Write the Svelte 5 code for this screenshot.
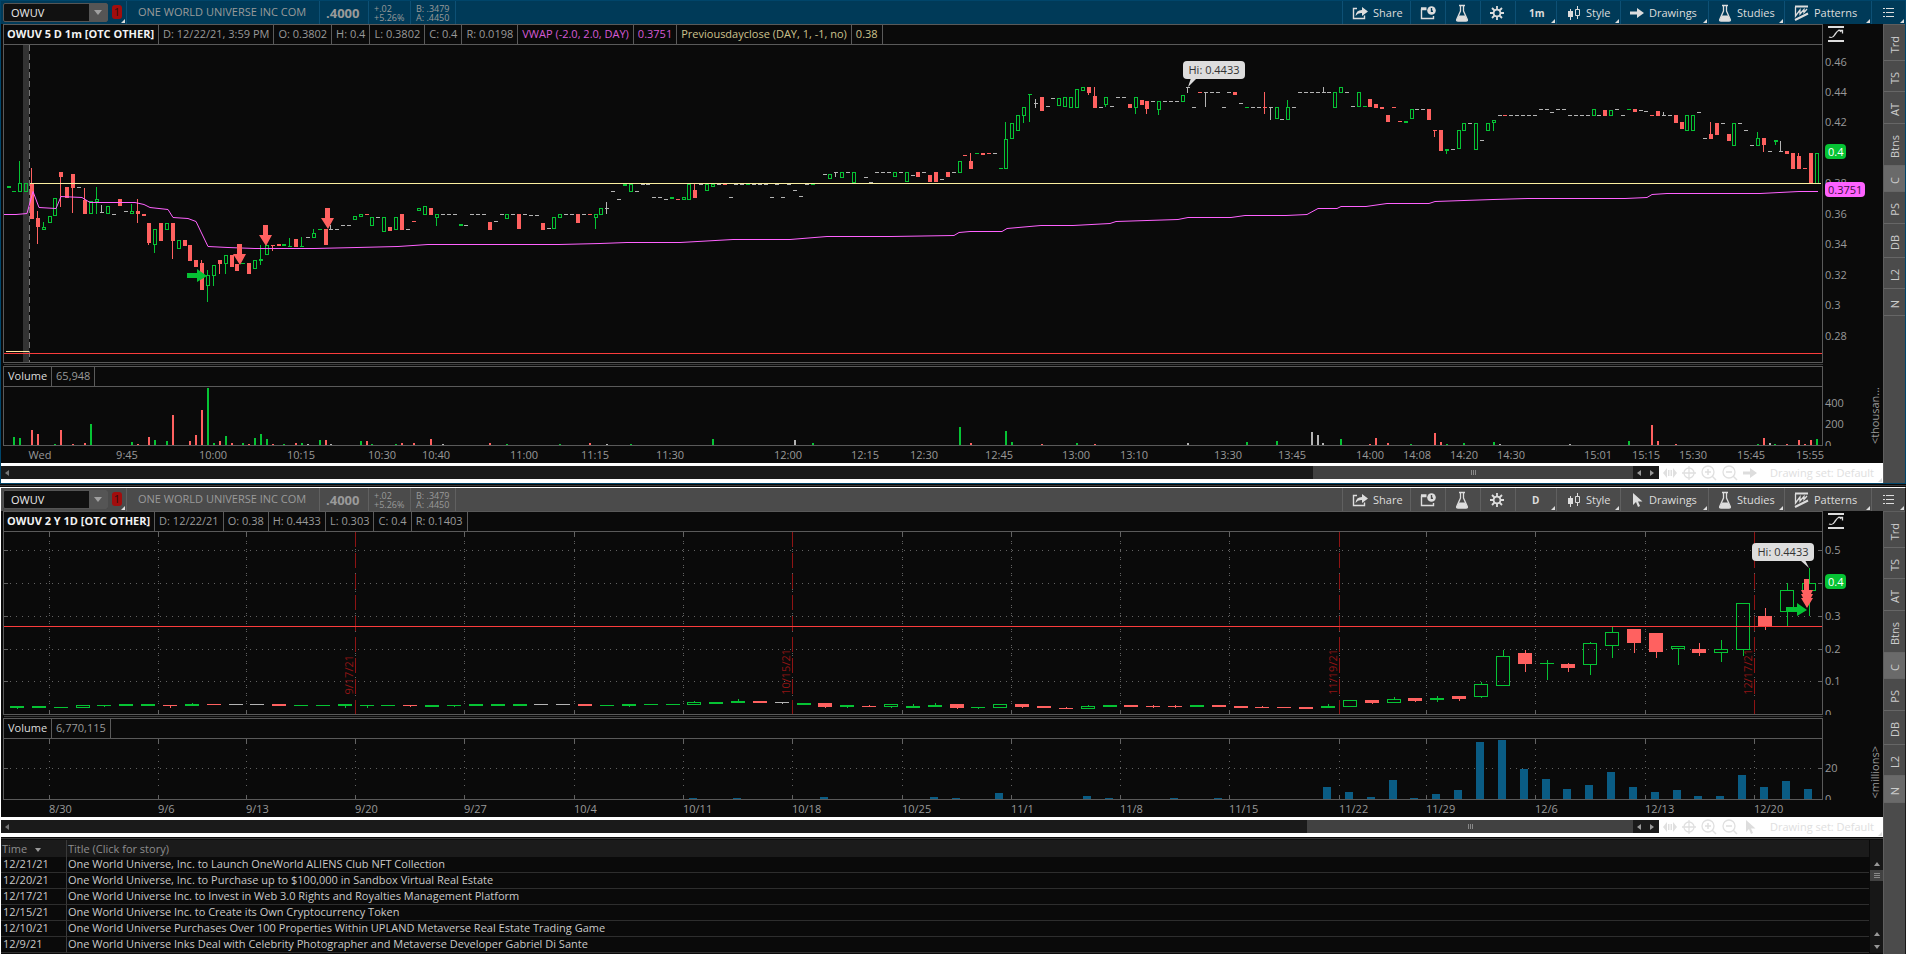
<script>
  const GREEN = '#06c334';
  const RED = '#ff6160';
  const GREY = '#b4b4b4';
  const tone = { h: GREEN, G: GREEN, g: GREEN, r: RED, d: RED, n: GREY };

  // Each mark: kind, x, top, bottom, [wick top, wick bottom]; dashes (n, g, d): kind, x, y, [wick top, wick bottom]
  function parse(source) {
    return source.trim().split(/\s*[,\n]\s*/).filter(Boolean).map((entry) => {
      const [kind, ...rest] = entry.split(' ');
      const v = rest.map(Number);
      if ('ngd'.includes(kind)) {
        return { kind, x: v[0], top: v[1], bottom: v[1] + 1, high: v[2] ?? v[1], low: v[3] ?? v[1] + 1 };
      }
      return { kind, x: v[0], top: v[1], bottom: v[2], high: v[3] ?? v[1], low: v[4] ?? v[2] };
    });
  }

  const minuteCandles = parse(`
    G 9 186 188,g 14 191,h 20 183 192 161 192,h 26 183 192,r 32 183 219 168 219,r 38 218 227 211 244
    h 44 227 230 222 230,h 50 216 223,h 55 198 216,r 61 172 177 172 207,r 67 187 198,r 73 174 188 174 213
    n 79 187,r 85 200 214 188 214,h 91 201 214,h 97 199 202 187 214,n 102 212 205 212,h 108 206 214,n 114 214
    r 120 199 206,n 126 211,h 132 211 214 204 214,r 138 211 214 199 223,r 144 214 216,r 149 223 243 223 245
    h 155 229 245 229 253,r 161 223 241,h 167 223 230,r 173 223 241 223 259,h 179 240 249,r 185 240 246
    r 190 245 261,r 196 260 267,r 202 263 290 260 290,h 208 275 286 270 302,h 214 265 276 265 286
    r 220 260 264 260 274,h 226 255 264 255 274,r 232 255 267,r 237 264 271,g 243 263,r 249 263 274,h 255 260 269
    G 261 259 261 245 265,h 267 245 255,d 273 245 245 251,r 279 244 246,G 284 244 246,g 290 246 238 246
    r 296 239 247,g 302 246 237 246,n 308 237,h 314 233 238 229 238,g 320 229,r 326 229 245,n 331 229 225 229
    n 337 229,n 343 225,n 349 225,h 355 216 220,h 361 214 217,d 367 214,h 372 217 226,n 378 217,h 384 217 232
    r 390 227 231,h 396 217 230,r 402 214 230,n 408 229,d 414 221,h 419 208 211,h 425 206 215,r 431 208 215
    h 437 214 218 214 226,n 443 214,n 449 214,n 455 214,G 461 224 226,n 466 225,n 472 214,n 478 214,n 484 214
    r 490 222 230,n 496 221,n 502 214,h 507 214 219,n 513 214,r 519 214 229,n 525 214,n 531 215,n 537 215
    r 543 223 230,n 549 228,h 554 217 229,h 560 214 218,n 566 214,n 572 214,r 578 214 223,n 584 214,d 590 214
    h 596 214 218 214 229,h 601 208 215,n 607 208 202 214,n 613 191,n 619 199,G 625 184 186,h 631 184 192,n 637 191
    n 643 184,n 648 184,n 654 197,n 660 197,n 666 199,G 672 197 199,d 678 199,h 684 197 200,h 689 184 200
    r 695 190 198 184 198,n 701 184,h 707 184 191,h 713 184 187,n 719 184,d 725 184,n 731 197,n 736 184,n 742 184
    g 748 184,n 754 184,n 760 184,n 766 184,n 772 197,n 777 184,n 783 197,n 789 184,n 795 190,n 801 196,n 807 184,g 813 184
    n 825 174,h 830 174 179,n 836 172 172 177,h 842 172 178,n 848 172,h 854 172 183,n 866 177,n 871 182,n 877 172
    n 883 172,n 889 172,h 895 172 177,n 901 172,h 907 172 182,n 913 175,r 918 172 177,n 924 172,r 930 175 182
    r 936 172 182,n 942 179,r 948 172 177,n 954 172,h 960 161 173,d 965 155,r 971 161 169 153 169,g 977 153
    r 983 153 155,d 989 153,n 995 153,g 1001 168,h 1006 139 169 122 169,h 1012 123 139,h 1018 115 131
    h 1024 107 116 107 123,g 1030 94 94 122,n 1036 103 99 108,r 1042 97 111,n 1048 106,n 1053 98,h 1059 98 106
    h 1065 97 107,h 1071 97 108,h 1077 89 108,h 1083 87 91,r 1089 87 93 87 95,r 1095 96 108 87 108,n 1101 107
    h 1106 97 105 97 107,n 1112 106,n 1118 97,n 1124 97,r 1130 104 108,h 1136 97 108 97 114,r 1142 100 105
    r 1147 101 109 101 114,n 1153 101,h 1159 101 110 101 115,n 1165 101,n 1171 101,n 1177 101,h 1183 95 102
    n 1188 87 87 93,n 1194 107,d 1200 92,n 1206 92 92 107,n 1212 92,n 1218 92,n 1224 107,n 1229 92,r 1235 92 95
    n 1241 103,g 1247 107,n 1253 107,n 1259 107,d 1265 107 92 114,n 1271 107 107 120,h 1277 107 119,n 1282 119
    h 1288 107 120 100 120,n 1294 107,n 1300 92,n 1306 92,n 1312 92,n 1318 92,n 1324 92 87 92,n 1329 92
    h 1335 92 108,h 1341 87 93,n 1347 92,n 1353 106,h 1359 92 107,g 1365 106,r 1370 99 107,r 1376 104 108
    r 1382 107 109,r 1388 115 122,d 1394 107,d 1400 121,G 1406 121 123,h 1412 109 119,n 1417 109,n 1423 109
    r 1429 109 120,d 1435 130 130 137,r 1441 130 151,G 1447 149 151 149 154,n 1453 149,h 1459 130 149
    h 1464 123 131,n 1470 123,h 1476 123 150,n 1482 140,h 1488 123 131,h 1494 120 123 120 131,n 1500 115
    d 1505 115,n 1511 115,n 1517 115,n 1523 115,n 1529 115,n 1535 115,n 1541 109,n 1547 109,n 1552 112,n 1558 109
    n 1564 109,n 1570 115,n 1576 115,n 1582 115,n 1588 115,h 1594 109 116,n 1599 115,r 1605 110 116,h 1611 110 116
    n 1617 109,n 1623 115,g 1629 109,r 1635 109 112,n 1641 110,n 1646 111,d 1652 115,r 1658 111 116
    n 1664 115 112 115,n 1670 115,r 1676 115 123,r 1682 122 129,h 1687 115 131,h 1693 115 131,n 1699 112
    n 1705 138,r 1711 134 139 122 139,r 1717 123 135,n 1723 123,r 1729 134 141,h 1734 123 146,n 1740 123
    n 1746 130,n 1752 145,h 1758 138 146 132 146,r 1764 138 145 138 152,n 1770 151,G 1776 140 142 140 145
    n 1781 151 141 151,r 1787 151 154,r 1793 153 169,r 1799 156 169 153 169,d 1805 168,r 1811 153 184,h 1817 153 184
  `);

  const vwap =
    '4,214 16,214 27,213 33,191 39,207 56,208 61,196 82,197 90,202 135,202 144,204 150,207 168,209 173,217 188,218 196,221 208,246 228,247 255,248 314,248 357,247 398,246 428,244 559,244 600,243 627,242 680,242 733,239 790,239 827,236 891,236 954,235 959,232 970,231 1002,231 1007,228 1041,225 1073,225 1110,223 1116,221 1178,219 1188,217 1231,217 1245,215 1286,215 1307,214 1318,208 1337,208 1341,206 1366,206 1387,203 1429,203 1435,201 1493,199 1528,198 1625,198 1647,197 1652,194 1667,193 1760,193 1799,191 1818,191';

  const minuteVolume = 'g 14 8,g 20 7,r 32 15,r 38 11,g 55 1,r 61 15,r 73 1,r 85 2,g 91 21,g 132 3,r 138 1,r 149 8,g 155 5,g 167 4,r 173 30,r 190 4,r 196 10,r 202 35,g 208 57,g 214 2,r 220 4,g 226 9,r 232 2,g 243 2,r 249 1,g 255 7,g 261 11,g 267 6,r 273 1,g 284 1,r 296 2,g 302 2,n 308 1,g 320 5,r 326 5,n 331 1,g 361 4,r 367 4,g 372 1,g 396 1,r 402 2,r 414 2,r 431 6,n 443 1,r 490 2,g 507 1,g 560 1,r 590 2,n 607 1,g 631 1,g 713 6,n 795 5,g 813 2,g 960 18,r 971 2,g 1006 14,g 1012 3,r 1042 1,g 1077 2,r 1095 1,n 1188 2,g 1247 3,g 1277 4,n 1312 13,n 1318 10,n 1323 2,g 1341 6,r 1370 1,r 1376 7,r 1388 2,g 1411 1,r 1435 12,r 1441 3,g 1447 1,g 1464 2,g 1494 3,n 1500 1,n 1570 1,g 1629 4,r 1652 20,r 1658 4,r 1676 1,g 1758 1,r 1764 7,n 1770 2,g 1775 1,r 1787 1,r 1799 5,r 1805 1,r 1811 5,g 1817 6'
    .split(',')
    .map((entry) => entry.split(' '))
    .map(([kind, x, h]) => ({ kind, x: +x, h: +h }));

  const slot = (i) => Math.round(17 + 21.85 * i);
  const dailyCandles = parse(`
    G 0 706 708 706 709,G 1 706 708,g 2 707,h 3 705 708,g 4 705 705 707,G 5 704 706,G 6 704 706,d 7 705 705 708
    G 8 704 706 703 706,d 9 704,n 10 704,n 11 704,r 12 704 706,g 13 705,g 14 705,G 15 704 706 704 708
    g 16 705 705 708,g 17 705,d 18 705 705 707,G 19 705 707,g 20 705 705 707,G 21 704 706,G 22 704 706,G 23 704 706
    n 24 704,n 25 704,r 26 704 706,g 27 705,G 28 704 706 704 707,g 29 704,g 30 704,h 31 702 705 701 705
    G 32 702 704,G 33 701 703 699 703,r 34 701 703,n 35 702 702 704,G 36 703 705,r 37 703 707 703 708
    G 38 705 707 705 708,d 39 706 705 707,h 40 704 707 704 708,G 41 706 708 704 708,G 42 705 707 703 707
    r 43 704 708 704 709,g 44 707 707 709,h 45 704 708,r 46 704 707 704 708,r 47 706 708,d 48 708 707 709
    h 49 706 709 705 709,G 50 705 707,r 51 705 707,d 52 706 705 708,d 53 706 705 708,G 54 705 707,r 55 705 707
    r 56 706 708,d 57 707 706 708,d 58 707,r 59 707 709,G 60 706 708 704 708,h 61 700 707,r 62 700 703 700 704
    h 63 699 703 697 703,r 64 698 701 698 702,h 65 698 700 696 702,r 66 696 699 696 701,h 67 684 697 682 698
    h 68 656 686 650 686,r 69 653 664 650 672,g 70 663 660 680,r 71 664 668 663 672,h 72 643 665 642 675
    h 73 632 646 627 658,r 74 629 643 629 653,r 75 633 652 633 658,h 76 646 649 646 665,r 77 649 653 643 656
    h 78 649 653 640 662,h 79 603 650 603 656,r 80 616 627 608 630,h 81 590 612 583 626,h 82 583 591 568 616
  `).map((c) => ({ ...c, x: slot(c.x) }));

  const recent = [12, 7, 2, 19, 1, 5, 9, 57, 59, 30, 20, 10, 14, 27, 12, 7, 9, 3, 3, 24, 12, 18, 10];
  const earlier = [[31, 1], [33, 1], [37, 2], [42, 2], [43, 1], [45, 6], [49, 3], [50, 1], [53, 1], [55, 1]];
  const dailyVolume = [...earlier, ...recent.map((h, i) => [60 + i, h])];

  const minuteTimes = [
    ['Wed', 40], ['9:45', 127], ['10:00', 213], ['10:15', 301], ['10:30', 382], ['10:40', 436], ['11:00', 524],
    ['11:15', 595], ['11:30', 670], ['12:00', 788], ['12:15', 865], ['12:30', 924], ['12:45', 999], ['13:00', 1076],
    ['13:10', 1134], ['13:30', 1228], ['13:45', 1292], ['14:00', 1370], ['14:08', 1417], ['14:20', 1464],
    ['14:30', 1511], ['15:01', 1598], ['15:15', 1646], ['15:30', 1693], ['15:45', 1751], ['15:55', 1810],
  ];
  const days = [
    ['8/30', 49], ['9/6', 158], ['9/13', 246], ['9/20', 355], ['9/27', 464], ['10/4', 574], ['10/11', 683],
    ['10/18', 792], ['10/25', 902], ['11/1', 1011], ['11/8', 1120], ['11/15', 1229], ['11/22', 1339],
    ['11/29', 1426], ['12/6', 1535], ['12/13', 1645], ['12/20', 1754],
  ];
  const expirations = [['9/17/21', 355], ['10/15/21', 792], ['11/19/21', 1339], ['12/17/21', 1754]];

  const minuteInfo = [
    ['OWUV 5 D 1m [OTC OTHER]', 'title'], ['D: 12/22/21, 3:59 PM', ''], ['O: 0.3802', ''], ['H: 0.4', ''],
    ['L: 0.3802', ''], ['C: 0.4', ''], ['R: 0.0198', ''], ['VWAP (-2.0, 2.0, DAY)', 'pink'], ['0.3751', 'pink'],
    ['Previousdayclose (DAY, 1, -1, no)', 'sand'], ['0.38', 'sand'],
  ];
  const dailyInfo = [
    ['OWUV 2 Y 1D [OTC OTHER]', 'title'], ['D: 12/22/21', ''], ['O: 0.38', ''], ['H: 0.4433', ''],
    ['L: 0.303', ''], ['C: 0.4', ''], ['R: 0.1403', ''],
  ];

  const tabs = [['Trd', 't36'], ['TS', 't31'], ['AT', 't32'], ['Btns', 't42'], ['C', 't26'], ['PS', 't32'], ['DB', 't34'], ['L2', 't31'], ['N', 't27']];

  const news = [
    ['12/21/21', 'One World Universe, Inc. to Launch OneWorld ALIENS Club NFT Collection'],
    ['12/20/21', 'One World Universe, Inc. to Purchase up to $100,000 in Sandbox Virtual Real Estate'],
    ['12/17/21', 'One World Universe Inc. to Invest in Web 3.0 Rights and Royalties Management Platform'],
    ['12/15/21', 'One World Universe Inc. to Create its Own Cryptocurrency Token'],
    ['12/10/21', 'One World Universe Purchases Over 100 Properties Within UPLAND Metaverse Real Estate Trading Game'],
    ['12/9/21', 'One World Universe Inks Deal with Celebrity Photographer and Metaverse Developer Gabriel Di Sante'],
  ];

  const left = (x) => `${((x - 4) / 1818) * 100}%`;
</script>

{#snippet candles(list, half, wickShift)}
  {#each list as c}
    {@const w = half * 2}
    {#if c.high < c.top}<rect x={c.x + wickShift} y={c.high} width="1" height={c.top - c.high} fill={tone[c.kind]} />{/if}
    {#if c.low > c.bottom}<rect x={c.x + wickShift} y={c.bottom} width="1" height={c.low - c.bottom} fill={tone[c.kind]} />{/if}
    {#if c.kind === 'h'}
      <path d="M{c.x - half} {c.top}h{w}v{c.bottom - c.top}h{-w}zM{c.x - half + 1} {c.top + 1}v{c.bottom - c.top - 2}h{w - 2}v{-(c.bottom - c.top - 2)}z" fill={GREEN} />
    {:else}
      <rect x={c.x - half} y={c.top} width={w} height={c.bottom - c.top} fill={tone[c.kind]} />
    {/if}
  {/each}
{/snippet}

{#snippet downArrow(x, y)}
  <path d="M{x - 3} {y}h5v10h4l-6 11l-7 -11h4z" fill={RED} />
{/snippet}

{#snippet flask()}
  <svg width="14" height="18" viewBox="0 0 14 18"><path d="M4 1.500h6M5.500 2v5L1.800 15.200Q1 17 3 17H11Q13 17 12.200 15.200L8.500 7V2" fill="none" stroke="#ddd" stroke-width="1.300" /><path d="M3.800 11.500h6.400l2.200 4.500Q12 17 11 17H3Q2 17 1.600 16z" fill="#ddd" /></svg>
{/snippet}

{#snippet rangeIcon()}
  <svg class="range" width="16" height="16" viewBox="0 0 16 16"><path d="M0 0h16v2H0zM0 14h16v2H0z" fill="#ddd" /><path d="M1 11C6 13 6 9 8 7C10 4 12 3 13 6M10 4.500h4.500v3" fill="none" stroke="#ddd" stroke-width="1.300" /></svg>
{/snippet}

{#snippet toolbar(interval, cursor)}
  <header class="toolbar">
    <div class="symbol">
      <input aria-label="Symbol" value="OWUV" />
      <button class="drop" aria-label="Choose symbol"><svg width="8" height="5" viewBox="0 0 8 5"><path d="M0 0h8L4 5z" fill="#a0a0a0" /></svg></button>
    </div>
    <button class="link corner"><span>1</span></button>
    <div class="quote name">ONE WORLD UNIVERSE INC COM</div>
    <div class="quote last">.4000</div>
    <div class="quote pair"><span>+.02</span><span>+5.26%</span></div>
    <div class="quote pair bid"><span>B: .3479</span><span>A: .4450</span></div>
    <nav>
      <button class="w68">
        <svg width="16" height="14" viewBox="0 0 16 14"><path d="M5 2.500H1.500V12.500H12.500V9.500" fill="none" stroke="#ddd" stroke-width="1.400" /><path d="M3.500 10Q4 4 10 4V1L16 5.500L10 10V7Q6 6.500 3.500 10z" fill="#ddd" /></svg>
        Share
      </button>
      <button class="w35" aria-label="Notes">
        <svg width="16" height="14" viewBox="0 0 16 14"><path d="M6.500 3.500H1.500V12.500H13.500V10M1 2h5.500" fill="none" stroke="#ddd" stroke-width="1.400" /><circle cx="11.500" cy="4.500" r="4.300" fill="#ddd" /><path class="hand" d="M11.500 2v3.200h1.500" fill="none" stroke-width="1.400" /></svg>
      </button>
      <button class="w35" aria-label="Lab">{@render flask()}</button>
      <button class="w35" aria-label="Settings">
        <svg width="14" height="14" viewBox="0 0 14 14"><g stroke="#ddd" stroke-width="1.800"><path d="M7 0v14M0 7h14M2 2l10 10M12 2L2 12" /></g><circle cx="7" cy="7" r="4.300" fill="#ddd" /><circle class="hole" cx="7" cy="7" r="2.500" /></svg>
      </button>
      <button class="w41 corner interval">{interval}</button>
      <button class="w64 corner">
        <svg width="13" height="14" viewBox="0 0 13 14"><path d="M0 5h5v6H0zM2 3h1v11H2zM9 0h1v3H9zM9 10h1v3H9z" fill="#ddd" /><path d="M7.500 3.500h4v6h-4z" fill="none" stroke="#ddd" /></svg>
        Style
      </button>
      <button class="w88 corner">
        {#if cursor === 'pointer'}
          <svg width="14" height="14" viewBox="0 0 14 14"><path d="M3 0v12l3-3l2 5l2-1l-2-4.500h4.500z" fill="#ddd" /></svg>
        {:else}
          <svg width="14" height="14" viewBox="0 0 14 14"><path d="M0 5.500h7V2l7 5l-7 5V8.500H0z" fill="#ddd" /></svg>
        {/if}
        Drawings
      </button>
      <button class="w76 corner">{@render flask()} Studies</button>
      <button class="w87 corner">
        <svg width="15" height="16" viewBox="0 0 15 16"><path d="M1 1.500h13M1 15L14 8.500" stroke="#ddd" stroke-width="2" /><path d="M1.500 2v9L6 5v4L10 4.500v3L13 4" fill="none" stroke="#ddd" stroke-width="1.300" /></svg>
        Patterns
      </button>
      <button class="w33 corner" aria-label="Menu">
        <svg width="11" height="12" viewBox="0 0 11 12"><path d="M0 1h2M3 1h8M0 5h2M3 5h8M0 9h2M3 9h8" transform="translate(0 .5)" stroke="#ddd" /></svg>
      </button>
    </nav>
  </header>
{/snippet}

{#snippet info(cells)}
  <div class="info">
    {#each cells as [text, kind]}<span class={kind}>{text}</span>{/each}
  </div>
{/snippet}

{#snippet scroller(wide, cursor)}
  <div class="scroller">
    <div class="track" class:wide>
      <button aria-label="Scroll left"><svg width="4" height="6" viewBox="0 0 4 6"><path d="M4 0v6L0 3z" fill="#777" /></svg></button>
      <div class="thumb"><i></i><i></i><i></i></div>
      <button aria-label="Step left"><svg width="4" height="6" viewBox="0 0 4 6"><path d="M4 0v6L0 3z" fill="#999" /></svg></button>
      <button aria-label="Step right"><svg width="4" height="6" viewBox="0 0 4 6"><path d="M0 0v6l4-3z" fill="#999" /></svg></button>
    </div>
    <div class="tools corner">
      <button aria-label="Pan"><svg width="14" height="12" viewBox="0 0 14 12"><path d="M4 1v10L0 6zM10 1v10l4-5zM5 3h1v6H5zM6.500 3h1v6h-1zM8 3h1v6H8z" fill="#e0e0e0" /></svg></button>
      <button aria-label="Crosshair"><svg width="14" height="14" viewBox="0 0 14 14"><circle cx="7" cy="7" r="5" fill="none" stroke="#e0e0e0" stroke-width="1.300" /><path d="M7 0v14M0 7h14" stroke="#e0e0e0" stroke-width="1.300" /></svg></button>
      <button aria-label="Zoom in"><svg width="16" height="16" viewBox="0 0 16 16"><circle cx="7" cy="7" r="6" fill="none" stroke="#e0e0e0" stroke-width="1.300" /><path d="M4 7h6M7 4v6M11 11l4 4" stroke="#e0e0e0" stroke-width="1.500" /></svg></button>
      <button aria-label="Zoom out"><svg width="16" height="16" viewBox="0 0 16 16"><circle cx="7" cy="7" r="6" fill="none" stroke="#e0e0e0" stroke-width="1.300" /><path d="M4 7h6M11 11l4 4" stroke="#e0e0e0" stroke-width="1.500" /></svg></button>
      <button aria-label="Cursor">
        {#if cursor === 'pointer'}
          <svg width="14" height="14" viewBox="0 0 14 14"><path d="M3 0v12l3-3l2 5l2-1l-2-4.500h4.500z" fill="#ddd" /></svg>
        {:else}
          <svg width="14" height="12" viewBox="0 0 14 12"><path d="M0 4.500h7V1l7 5l-7 5V7.500H0z" fill="#ddd" /></svg>
        {/if}
      </button>
      <button class="set">Drawing set: Default</button>
    </div>
  </div>
{/snippet}

{#snippet side(active)}
  <aside>
    {#each tabs as [name, size]}
      <button class={size} class:active={active.includes(name)}><span>{name}</span></button>
    {/each}
  </aside>
{/snippet}

<div class="desk">
  <section class="panel blue">
    {@render toolbar('1m', 'arrow')}
    <div class="body">
      <div class="main">
        <div class="row">
          <div class="frame">
            {@render info(minuteInfo)}
            <div class="plot">
              <svg width="100%" height="317" viewBox="4 45 1818 317" preserveAspectRatio="none" shape-rendering="crispEdges">
                <rect x="23" y="45" width="6" height="317" fill="#333" />
                <path d="M29.500 45V362" stroke="#777" stroke-dasharray="6 3" />
                <path d="M6 351.500H29" stroke="#ffe9a0" />
                <path d="M4 353.500H1822" stroke="#fb3c3c" />
                {@render candles(minuteCandles, 2, -1)}
                <path d="M30 183.500H1821" stroke="#fbefa0" />
                <polyline points={vwap} fill="none" stroke="#ff62ff" transform="translate(0 .5)" shape-rendering="auto" />
                <g shape-rendering="auto">
                  {@render downArrow(240, 244)}
                  {@render downArrow(266, 225)}
                  {@render downArrow(328, 208)}
                  <path d="M187 273h10v-4l10 7l-10 6v-4h-10z" fill={GREEN} />
                  <path d="M1191 78h6l-9 9z" fill="#ddd" />
                </g>
              </svg>
              <span class="bubble first" style:left={left(1183)}>Hi: 0.4433</span>
            </div>
          </div>
          <div class="axis">
            {@render rangeIcon()}
            {#each [['0.46', 63], ['0.44', 93], ['0.42', 123], ['0.38', 184], ['0.36', 215], ['0.34', 245], ['0.32', 276], ['0.3', 306], ['0.28', 337]] as [t, y]}
              <span style:top="{y - 32}px">{t}</span>
            {/each}
            <b class="now" style:top="{152 - 32}px">0.4</b>
            <b class="avg" style:top="{190 - 32}px">0.3751</b>
          </div>
        </div>
        <div class="gap"></div>
        <div class="row">
          <div class="frame">
            {@render info([['Volume', 'label'], ['65,948', '']])}
            <div class="plot">
              <svg width="100%" height="58" viewBox="4 387 1818 58" preserveAspectRatio="none" shape-rendering="crispEdges">
                {#each minuteVolume as b}<rect x={b.x - 1} y={445 - b.h} width="2" height={b.h} fill={tone[b.kind]} />{/each}
              </svg>
            </div>
          </div>
          <div class="axis clip">
            {#each [['400', 404], ['200', 425], ['0', 446]] as [t, y]}<span style:top="{y - 374}px">{t}</span>{/each}
            <em class="unit">&lt;thousan...</em>
          </div>
        </div>
        <div class="times">
          {#each minuteTimes as [t, x]}<span class="mid" style:left={left(x)}>{t}</span>{/each}
        </div>
        {@render scroller(false, 'arrow')}
      </div>
      {@render side(['C'])}
    </div>
  </section>
  <div class="split"></div>
  <section class="panel grey">
    {@render toolbar('D', 'pointer')}
    <div class="body">
      <div class="main">
        <div class="row">
          <div class="frame">
            {@render info(dailyInfo)}
            <div class="plot">
              <svg width="100%" height="182" viewBox="4 532 1818 182" preserveAspectRatio="none" shape-rendering="crispEdges">
                {#each [550, 583, 616, 649, 681] as y}
                  <path d="M10 {y + 0.5}H1816" stroke="#626262" stroke-dasharray="1 5" />
                  <path d="M4 {y + 0.5}h4M1818 {y + 0.5}h4" stroke="#626262" />
                {/each}
                {#each days as [, x]}
                  <path d="M{x + 0.5} 541V708" stroke="#626262" stroke-dasharray="1 1 1 5" />
                  <path d="M{x + 0.5} 532v5M{x + 0.5} 710v4" stroke="#626262" />
                {/each}
                {#each expirations as [, x]}
                  <path d="M{x + 0.5} 532V714" stroke="#8e1414" stroke-dasharray="15 6" />
                {/each}
                {@render candles(dailyCandles, 7, 0)}
                <path d="M4 626.500H1822" stroke="#fb3c3c" />
                <g shape-rendering="auto">
                  <path d="M1804 579h5v11h4l-2 4h2l-2 4h2l-6 10l-6-10h2l-2-4h2l-2-4h3z" fill={RED} />
                  <path d="M1786 607h11v-4l10 7l-10 6v-4h-11z" fill={GREEN} />
                  <path d="M1800 560h5l4 8z" fill="#ddd" />
                </g>
              </svg>
              {#each expirations as [t, x]}<em class="expiry" style:left={left(x - 14)}>{t}</em>{/each}
              <span class="bubble second" style:left={left(1752)}>Hi: 0.4433</span>
            </div>
          </div>
          <div class="axis clip">
            {@render rangeIcon()}
            {#each [['0.5', 551], ['0.3', 617], ['0.2', 650], ['0.1', 682], ['0', 715]] as [t, y]}
              <span style:top="{y - 519}px">{t}</span>
            {/each}
            <b class="now" style:top="{582 - 519}px">0.4</b>
          </div>
        </div>
        <div class="gap"></div>
        <div class="row">
          <div class="frame">
            {@render info([['Volume', 'label'], ['6,770,115', '']])}
            <div class="plot">
              <svg width="100%" height="60" viewBox="4 739 1818 60" preserveAspectRatio="none" shape-rendering="crispEdges">
                <path d="M10 768.500H1816" stroke="#626262" stroke-dasharray="1 5" />
                <path d="M4 768.500h4M1818 768.500h4" stroke="#626262" />
                {#each days as [, x]}
                  <path d="M{x + 0.5} 749V790" stroke="#626262" stroke-dasharray="1 5" />
                  <path d="M{x + 0.5} 739v5M{x + 0.5} 795v4" stroke="#626262" />
                {/each}
                {#each dailyVolume as [i, h]}<rect x={slot(i) - 5} y={799 - h} width="8" height={h} fill="#0a5c84" />{/each}
              </svg>
            </div>
          </div>
          <div class="axis clip">
            {#each [['20', 769], ['0', 800]] as [t, y]}<span style:top="{y - 726}px">{t}</span>{/each}
            <em class="unit">&lt;millions&gt;</em>
          </div>
        </div>
        <div class="times">
          {#each days as [t, x]}<span style:left={left(x)}>{t}</span>{/each}
        </div>
        {@render scroller(true, 'pointer')}
        <div class="split"></div>
        <div class="news">
          <table>
            <thead><tr><th class="time">Time <svg width="6" height="4" viewBox="0 0 6 4"><path d="M0 0h6L3 4z" fill="#999" /></svg></th><th>Title (Click for story)</th></tr></thead>
            <tbody>
              {#each news as [date, title]}<tr><td>{date}</td><td><a href="#story">{title}</a></td></tr>{/each}
            </tbody>
          </table>
          <div class="vscroll">
            <button aria-label="Scroll up"><svg width="6" height="4" viewBox="0 0 6 4"><path d="M0 4h6L3 0z" fill="#999" /></svg></button>
            <div class="vthumb"><i></i><i></i><i></i></div>
            <span class="fill"></span>
            <button aria-label="Step up"><svg width="6" height="4" viewBox="0 0 6 4"><path d="M0 4h6L3 0z" fill="#999" /></svg></button>
            <button aria-label="Step down"><svg width="6" height="4" viewBox="0 0 6 4"><path d="M0 0h6L3 4z" fill="#999" /></svg></button>
          </div>
        </div>
      </div>
      {@render side(['C', 'N'])}
    </div>
  </section>
</div>

<style>
  :global(body) { background: #0a0a0a; }
  .desk, .desk :is(button, input) { font-family: 'Open Sans', 'Noto Sans', sans-serif; font-size: 11px; }
  .desk { color: #999; line-height: 16px; display: flex; flex-direction: column; min-height: 100vh; background: #0a0a0a; }
  .desk *, .desk { box-sizing: border-box; }
  button { background: none; border: 0; padding: 0; margin: 0; color: inherit; line-height: 16px; }
  svg { display: block; flex: none; }

  .panel { display: flex; flex-direction: column; --bar: #003a58; --rule: #0d5075; }
  .blue { border: 1px solid #00456a; }
  .grey { --bar: #4b4b4b; --rule: #606060; border-top: 1px solid #fff; border-left: 1px solid #fff; border-right: 1px solid #1a1a1a; flex: 1; }

  .toolbar { display: flex; height: 23px; background: var(--bar); padding-left: 2px; }
  .symbol { display: flex; width: 105px; height: 19px; margin-top: 2px; border: 1px solid #555; background: #111; border-radius: 2px; }
  .symbol input { flex: 1; min-width: 0; border: 0; background: none; color: #ececec; padding: 0 0 0 7px; outline: 0; }
  .drop { width: 18px; background: #555; display: flex; align-items: center; justify-content: center; }
  .link { width: 18px; display: flex; padding: 4px 0 0 4px; position: relative; }
  .link span { width: 10px; height: 14px; background: #a20d0d; border-radius: 3px; color: #2a1010; line-height: 14px; }
  .quote { border-left: 1px solid var(--rule); color: #9a9a9a; line-height: 22px; white-space: nowrap; }
  .name { width: 193px; padding-left: 11px; }
  .last { width: 49px; padding-left: 6px; font-size: 13px; font-weight: 700; line-height: 24px; }
  .pair { width: 42px; padding-left: 5px; font-size: 9px; line-height: 9px; display: flex; flex-direction: column; padding-top: 3px; }
  .bid { width: 46px; border-right: 1px solid var(--rule); }
  nav { display: flex; margin-left: auto; }
  nav button { border-left: 1px solid var(--rule); display: flex; align-items: center; gap: 5px; padding-left: 9px; color: #ddd; position: relative; white-space: nowrap; }
  .corner { position: relative; }
  .corner::after { content: ''; position: absolute; right: 1px; bottom: 1px; border: 2px solid; border-color: transparent #ddd #ddd transparent; }
  .w68 { width: 68px; }
  .w35 { width: 35px; }
  .w41 { width: 41px; }
  .w64 { width: 64px; padding-left: 11px; }
  .w88 { width: 88px; }
  .w76 { width: 76px; }
  .w87 { width: 87px; }
  .w33 { width: 34px; padding-left: 11px; }
  nav .interval { font-size: 10px; font-weight: 700; padding-left: 13px; }
  .grey nav .interval { padding-left: 16px; }
  .hole { fill: var(--bar); }
  .hand { stroke: var(--bar); }

  .body { display: flex; flex: 1; }
  .main { flex: 1; min-width: 0; display: flex; flex-direction: column; }
  .row { display: flex; padding-left: 2px; }
  .frame { flex: 1; min-width: 0; border: 1px solid #5a5a5a; }
  .info { display: flex; height: 20px; border-bottom: 1px solid #5a5a5a; line-height: 18px; white-space: nowrap; }
  .info span { padding: 0 4px; border-right: 1px solid #5a5a5a; }
  .info .title { color: #f2f2f2; font-weight: 700; padding: 0 4px 0 3px; }
  .info .label { color: #ddd; }
  .info .pink { color: #d65bd6; }
  .info .sand { color: #cdc28e; }
  .plot { position: relative; }
  .bubble { position: absolute; width: 62px; height: 18px; line-height: 18px; background: #ddd; border-radius: 4px; color: #333; text-align: center; }
  .first { top: 16px; }
  .second { top: 11px; }
  .expiry { position: absolute; bottom: 19px; color: #8e1414; font-style: normal; writing-mode: vertical-rl; transform: rotate(180deg); }
  .axis { width: 60px; position: relative; }
  .clip { overflow: hidden; }
  .axis span { position: absolute; left: 2px; line-height: 14px; }
  .axis b { position: absolute; left: 2px; height: 15px; line-height: 15px; border-radius: 4px; padding: 0 3px; font-weight: 400; }
  .now { background: #06c334; color: #fff; }
  .avg { background: #ff62ff; color: #3c103c; }
  .axis :global(.range) { margin: 2px 0 0 5px; }
  .unit { position: absolute; right: 0; bottom: 2px; font-style: normal; writing-mode: vertical-rl; transform: rotate(180deg); }
  .gap { height: 3px; margin: 0 60px 0 3px; border: solid #0a0a0a; border-width: 1px 0; background: #3a3a3a; }
  .times { height: 17px; position: relative; margin: 0 61px 0 3px; }
  .times span { position: absolute; top: 1px; white-space: nowrap; }
  .times .mid { transform: translateX(-50%); }

  .scroller { display: flex; height: 20px; background: #fff; }
  .track { flex: 1; display: grid; grid-template-columns: 1312fr 320fr 13px 13px; height: 13px; margin-top: 3px; background: #1a1a1a; }
  .track.wide { grid-template-columns: 1306fr 326fr 13px 13px; }
  .track button { display: flex; align-items: center; padding-left: 4px; }
  .thumb { background: #414141; display: flex; gap: 1px; align-items: center; justify-content: center; }
  .thumb i { width: 1px; height: 5px; background: #888; }
  .tools { width: 224px; display: flex; align-items: center; gap: 5px; padding-left: 4px; color: #e0e0e0; }
  .tools button { flex: none; }
  .tools .set { margin-left: 8px; }

  aside { width: 22px; background: #4b4b4b; border-left: 1px solid #5e5e5e; border-top: 1px solid #5e5e5e; display: flex; flex-direction: column; color: #ccc; }
  aside button { border-bottom: 1px solid #666; display: flex; align-items: center; justify-content: center; padding-top: 4px; }
  aside span { writing-mode: vertical-rl; transform: rotate(180deg); }
  .active { background: #6a6a6a; }
  .t26 { height: 26px; }
  .t27 { height: 27px; }
  .t31 { height: 31px; }
  .t32 { height: 32px; }
  .t34 { height: 34px; }
  .t36 { height: 36px; }
  .t42 { height: 42px; }

  .split { height: 3px; background: #3a3a3a; border: solid #0a0a0a; border-width: 1px 0; }
  .news { display: flex; }
  table { flex: 1; border-collapse: separate; border-spacing: 0; table-layout: fixed; color: #c9c9c9; }
  th { height: 17px; padding: 0 0 1px 1px; text-align: left; font-weight: 400; background: #1b1b1b; color: #8d8d8d; line-height: 15px; }
  .time { width: 66px; }
  .time svg { display: inline-block; vertical-align: middle; margin-left: 5px; }
  td { height: 16px; padding: 0 0 1px 1px; line-height: 14px; border-bottom: 1px solid #2e2e2e; }
  td:first-child { padding-left: 2px; }
  tr > :first-child { border-right: 1px solid #3a3a3a; }
  a { color: inherit; text-decoration: none; }
  .vscroll { width: 13px; margin-left: 1px; background: #171717; display: flex; flex-direction: column; padding-top: 17px; }
  .vscroll button { height: 13px; display: flex; align-items: center; justify-content: center; }
  .vthumb { height: 11px; background: #414141; display: flex; flex-direction: column; align-items: center; justify-content: center; gap: 1px; }
  .vthumb i { width: 6px; height: 1px; background: #888; }
  .fill { flex: 1; }
</style>
